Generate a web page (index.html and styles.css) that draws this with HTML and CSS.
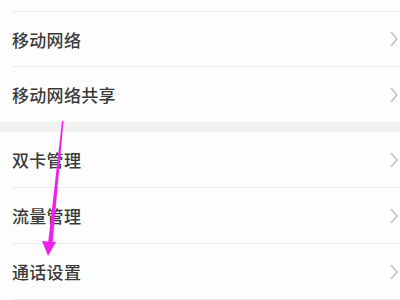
FILE: index.html
```html
<!DOCTYPE html>
<html lang="zh">
<head>
<meta charset="utf-8">
<link rel="stylesheet" href="styles.css">
</head>
<body>
<div class="screen">
  <div class="top-spacer"></div>
  <div class="group">
    <div class="row"><span class="label">移动网络</span><svg class="chev" viewBox="0 0 8 16"><path d="M1 1 L7 8 L1 15"/></svg></div>
    <div class="row last"><span class="label">移动网络共享</span><svg class="chev" viewBox="0 0 8 16"><path d="M1 1 L7 8 L1 15"/></svg></div>
  </div>
  <div class="band"></div>
  <div class="group">
    <div class="row tall"><span class="label">双卡管理</span><svg class="chev" viewBox="0 0 8 16"><path d="M1 1 L7 8 L1 15"/></svg></div>
    <div class="row tall"><span class="label">流量管理</span><svg class="chev" viewBox="0 0 8 16"><path d="M1 1 L7 8 L1 15"/></svg></div>
    <div class="row tall"><span class="label">通话设置</span><svg class="chev" viewBox="0 0 8 16"><path d="M1 1 L7 8 L1 15"/></svg></div>
  </div>
  <svg class="arrow" width="400" height="300" viewBox="0 0 400 300">
    <polygon points="62,121 63.5,121 52.5,244 48,244" fill="#ee22ee"/>
    <polygon points="42,241 56,242 48,256" fill="#ee22ee"/>
  </svg>
</div>
</body>
</html>
```
FILE: styles.css
```css
html, body {
  margin: 0;
  padding: 0;
  background: #fdfdfd;
}
.screen {
  position: relative;
  width: 400px;
  height: 300px;
  overflow: hidden;
  font-family: "Noto Sans CJK SC", "Noto Sans", sans-serif;
}
.top-spacer {
  height: 12px;
  margin-left: 12px;
  border-bottom: 1px solid #ececec;
  box-sizing: border-box;
}
.group {
  display: flex;
  flex-direction: column;
}
.row {
  height: 55px;
  margin-left: 12px;
  border-bottom: 1px solid #ececec;
  box-sizing: border-box;
  display: flex;
  align-items: center;
  justify-content: space-between;
}
.row.last {
  border-bottom: none;
}
.row.tall {
  height: 56px;
}
.label {
  font-size: 17px;
  font-weight: 500;
  color: #3a3a3a;
  letter-spacing: 0.3px;
}
.chev {
  width: 8px;
  height: 16px;
  margin-right: 2px;
  fill: none;
  stroke: #bdbdbd;
  stroke-width: 1.4;
}
.band {
  height: 10px;
  background: #f1f1f1;
}
.arrow {
  position: absolute;
  left: 0;
  top: 0;
}
```
